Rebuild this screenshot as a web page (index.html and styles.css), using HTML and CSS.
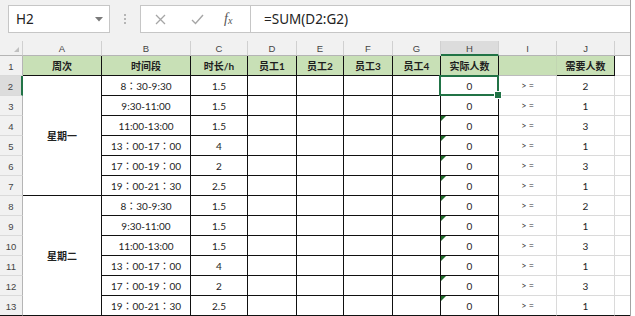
FILE: index.html
```html
<!DOCTYPE html>
<html>
<head>
<meta charset="utf-8">
<link rel="stylesheet" href="styles.css">
</head>
<body>
<div class="app">
  <div class="toolbar">
    <div class="namebox">
      <span>H2</span>
      <svg class="caret" width="8" height="5" viewBox="0 0 8 5"><path d="M0 0H8L4 4.5Z" fill="#7a7a7a"/></svg>
    </div>
    <div class="dots"><i></i><i></i><i></i></div>
    <div class="tools">
      <svg class="ic-x" width="11" height="11" viewBox="0 0 11 11"><path d="M1 1L10 10M10 1L1 10" stroke="#a6a6a6" stroke-width="1.3" fill="none"/></svg>
      <svg class="ic-ok" width="13" height="11" viewBox="0 0 13 11"><path d="M1 6L4.5 9.5L12 1" stroke="#a6a6a6" stroke-width="1.4" fill="none"/></svg>
      <span class="fx">f<span class="fx-sub">x</span></span>
    </div>
    <div class="formula">=SUM(D2:G2)</div>
  </div>
  <div class="sheet">
    <div class="c ch corner"><span class="corner-tri"></span></div>
    <div class="c ch">A</div>
    <div class="c ch">B</div>
    <div class="c ch">C</div>
    <div class="c ch">D</div>
    <div class="c ch">E</div>
    <div class="c ch">F</div>
    <div class="c ch">G</div>
    <div class="c ch ch-sel">H</div>
    <div class="c ch">I</div>
    <div class="c ch">J</div>
    <div class="c ch last"></div>

    <div class="c rh">1</div>
    <div class="c d hd">周次</div>
    <div class="c d hd">时间段</div>
    <div class="c d hd">时长/h</div>
    <div class="c d hd">员工1</div>
    <div class="c d hd">员工2</div>
    <div class="c d hd">员工3</div>
    <div class="c d hd">员工4</div>
    <div class="c d hd">实际人数</div>
    <div class="c hd hd-i"></div>
    <div class="c d hd">需要人数</div>
    <div class="c last"></div>

    <div class="c rh rh-sel">2</div>
    <div class="c d merged">星期一</div>
    <div class="c d tm">8：30-9:30</div><div class="c d">1.5</div><div class="c d"></div><div class="c d"></div><div class="c d"></div><div class="c d"></div>
    <div class="c d sel">0</div><div class="c ge">&gt; =</div><div class="c">2</div><div class="c last"></div>

    <div class="c rh">3</div>
    <div class="c d tm">9:30-11:00</div><div class="c d">1.5</div><div class="c d"></div><div class="c d"></div><div class="c d"></div><div class="c d"></div>
    <div class="c d">0</div><div class="c ge">&gt; =</div><div class="c">1</div><div class="c last"></div>

    <div class="c rh">4</div>
    <div class="c d tm">11:00-13:00</div><div class="c d">1.5</div><div class="c d"></div><div class="c d"></div><div class="c d"></div><div class="c d"></div>
    <div class="c d tri">0</div><div class="c ge">&gt; =</div><div class="c">3</div><div class="c last"></div>

    <div class="c rh">5</div>
    <div class="c d tm">13：00-17：00</div><div class="c d">4</div><div class="c d"></div><div class="c d"></div><div class="c d"></div><div class="c d"></div>
    <div class="c d tri">0</div><div class="c ge">&gt; =</div><div class="c">1</div><div class="c last"></div>

    <div class="c rh">6</div>
    <div class="c d tm">17：00-19：00</div><div class="c d">2</div><div class="c d"></div><div class="c d"></div><div class="c d"></div><div class="c d"></div>
    <div class="c d tri">0</div><div class="c ge">&gt; =</div><div class="c">3</div><div class="c last"></div>

    <div class="c rh">7</div>
    <div class="c d tm">19：00-21：30</div><div class="c d">2.5</div><div class="c d"></div><div class="c d"></div><div class="c d"></div><div class="c d"></div>
    <div class="c d tri">0</div><div class="c ge">&gt; =</div><div class="c">1</div><div class="c last"></div>

    <div class="c rh">8</div>
    <div class="c d merged">星期二</div>
    <div class="c d tm">8：30-9:30</div><div class="c d">1.5</div><div class="c d"></div><div class="c d"></div><div class="c d"></div><div class="c d"></div>
    <div class="c d tri">0</div><div class="c ge">&gt; =</div><div class="c">2</div><div class="c last"></div>

    <div class="c rh">9</div>
    <div class="c d tm">9:30-11:00</div><div class="c d">1.5</div><div class="c d"></div><div class="c d"></div><div class="c d"></div><div class="c d"></div>
    <div class="c d tri">0</div><div class="c ge">&gt; =</div><div class="c">1</div><div class="c last"></div>

    <div class="c rh">10</div>
    <div class="c d tm">11:00-13:00</div><div class="c d">1.5</div><div class="c d"></div><div class="c d"></div><div class="c d"></div><div class="c d"></div>
    <div class="c d tri">0</div><div class="c ge">&gt; =</div><div class="c">3</div><div class="c last"></div>

    <div class="c rh">11</div>
    <div class="c d tm">13：00-17：00</div><div class="c d">4</div><div class="c d"></div><div class="c d"></div><div class="c d"></div><div class="c d"></div>
    <div class="c d tri">0</div><div class="c ge">&gt; =</div><div class="c">1</div><div class="c last"></div>

    <div class="c rh">12</div>
    <div class="c d tm">17：00-19：00</div><div class="c d">2</div><div class="c d"></div><div class="c d"></div><div class="c d"></div><div class="c d"></div>
    <div class="c d tri">0</div><div class="c ge">&gt; =</div><div class="c">3</div><div class="c last"></div>

    <div class="c rh b">13</div>
    <div class="c d b tm">19：00-21：30</div><div class="c d b">2.5</div><div class="c d b"></div><div class="c d b"></div><div class="c d b"></div><div class="c d b"></div>
    <div class="c d b tri">0</div><div class="c ge b">&gt; =</div><div class="c b">1</div><div class="c last b"></div>
  </div>
</div>
</body>
</html>
```
FILE: styles.css
```css
* { box-sizing: border-box; margin: 0; padding: 0; }
body { width: 635px; height: 316px; overflow: hidden; background: #fff; }
.app {
  width: 631px; height: 316px; background: #f1f1f1;
  border-right: 1px solid #a3a3a3;
  font-family: "Lato", "Noto Sans CJK SC", sans-serif;
}
.toolbar { height: 41px; display: flex; align-items: flex-start; padding: 5px 0 0 8px; }
.namebox {
  width: 102px; height: 28px; background: #fff; border: 1px solid #c6c6c6;
  display: flex; align-items: center; justify-content: space-between;
  padding: 0 6px 0 7px; font: 13.5px "Noto Sans", sans-serif; color: #222;
}
.caret { margin-top: 1px; }
.dots { width: 30px; height: 28px; display: flex; flex-direction: column; align-items: center; justify-content: center; gap: 2px; }
.dots i { display: block; width: 2px; height: 2px; background: #b5b5b5; }
.tools {
  width: 111px; height: 28px; background: #fff; border: 1px solid #c6c6c6;
  display: flex; align-items: center; padding-left: 14px;
}
.ic-x { margin-right: 25px; }
.ic-ok { margin-right: 20px; }
.fx { font: italic 14px "Liberation Serif", serif; color: #555; }
.fx-sub { font-size: 10px; position: relative; top: 1px; }
.formula {
  flex: 1; height: 28px; background: #fff; border-top: 1px solid #c6c6c6; border-bottom: 1px solid #c6c6c6;
  display: flex; align-items: center; padding-left: 13px;
  font: 13.5px "Noto Sans", sans-serif; color: #222;
}
.sheet {
  display: grid;
  grid-template-columns: 23px 79px 89px 57px 49px 47px 49px 48px 58px 58px 58px 15px;
  grid-template-rows: 15px repeat(13, 20px);
  background: #fff;
}
.c {
  position: relative;
  border-right: 1px solid #dadada; border-bottom: 1px solid #dadada;
  display: flex; align-items: center; justify-content: center;
  font-size: 10px; color: #1e1e1e; white-space: nowrap;
}
.c.last { border-right: none; }
.c.d { border-right-color: #111; border-bottom-color: #111; }
.c.hd { background: #c8e0b6; font-weight: bold; }
.c.hd-i { border-right-color: #c2d6b2; border-bottom-color: #bcbcbc; }
.merged { grid-row: span 6; font-weight: bold; color: #222; }
.tm { font-family: "Lato", "Noto Sans CJK TC", sans-serif; }
.ge { font-size: 9px; color: #333; }
.c.b { border-bottom-color: #111; }
.ch {
  background: #f1f1f1; color: #444; font-size: 9.5px; font-family: "Liberation Sans", sans-serif;
  border-right-color: #d0d0d0; border-bottom-color: #b5b5b5; padding-top: 1px;
}
.ch-sel { background: #dcdcdc; border-bottom: 2px solid #217346; }
.corner { justify-content: flex-end; align-items: flex-end; padding: 0 3px 3px 0; }
.corner-tri { width: 0; height: 0; border-left: 5px solid transparent; border-bottom: 5px solid #c0c0c0; }
.rh {
  background: #f1f1f1; color: #444; font-size: 9.5px; font-family: "Liberation Sans", sans-serif;
  border-right-color: #b5b5b5; border-bottom-color: #dadada;
  align-items: flex-end; padding-bottom: 3px;
}
.rh-sel { background: #dcdcdc; border-right: 2px solid #217346; }
.sel { z-index: 2; }
.sel::after {
  content: ""; position: absolute; left: -2px; top: -1px; right: -1px; bottom: -1px;
  border: 2px solid #217346;
}
.sel::before {
  content: ""; position: absolute; right: -4px; bottom: -4px; width: 6px; height: 6px;
  background: #217346; border: 1px solid #fff; z-index: 3;
}
.tri::before {
  content: ""; position: absolute; left: 0; top: 0; width: 0; height: 0;
  border-top: 5px solid #1f6b2a; border-right: 5px solid transparent;
}
```
